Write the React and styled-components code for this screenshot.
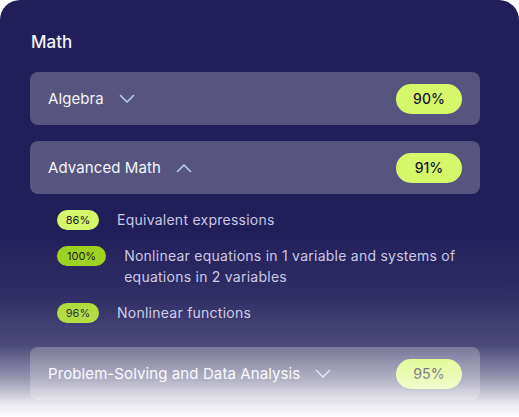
import React from 'react';
import styled, { createGlobalStyle } from 'styled-components';

const Global = createGlobalStyle`
  html, body { margin: 0; padding: 0; background: #ffffff; }
  body { font-family: Inter, "Noto Sans", sans-serif; }
`;

const Card = styled.div`
  position: relative;
  width: 519px;
  height: 417px;
  overflow: hidden;
  box-sizing: border-box;
  background: #211e5a;
  border-radius: 20px 20px 0 0;
  padding: 30px 39px 0 30px;
  display: flex;
  flex-direction: column;
`;

const Title = styled.div`
  font-size: 17px;
  line-height: 24px;
  font-weight: 500;
  color: #f3f3f8;
  padding-left: 1px;
  margin-bottom: 18px;
`;

const Section = styled.div`
  display: flex;
  flex-direction: column;
  margin-bottom: ${(p) => (p.open ? '0' : '16px')};
`;

const Row = styled.div`
  height: 53px;
  flex-shrink: 0;
  box-sizing: border-box;
  border-radius: 8px;
  background: #57547f;
  padding: 0 18px;
  display: flex;
  align-items: center;
`;

const RowLabel = styled.span`
  font-size: 15px;
  color: #f4f4fa;
  font-weight: 400;
  letter-spacing: 0.1px;
`;

const Chevron = styled.svg`
  margin-left: 15px;
  width: 16px;
  height: 10px;
  flex-shrink: 0;
`;

const Badge = styled.span`
  margin-left: auto;
  width: 66px;
  height: 30px;
  border-radius: 15px;
  background: #d7f76a;
  color: #15152a;
  font-size: 14px;
  font-weight: 500;
  display: flex;
  align-items: center;
  justify-content: center;
`;

const SubList = styled.div`
  display: flex;
  flex-direction: column;
  gap: 15px;
  padding: 15px 24px 24px 27px;
`;

const SubItem = styled.div`
  display: flex;
  align-items: flex-start;
  gap: 18px;
`;

const Pill = styled.span`
  flex-shrink: 0;
  height: 20px;
  margin-top: 1px;
  padding: 0 ${(p) => (p.wide ? '10px' : '8px')};
  min-width: 42px;
  box-sizing: border-box;
  border-radius: 10px;
  background: ${(p) => p.tone};
  color: #15152a;
  font-size: 11px;
  font-weight: 400;
  display: flex;
  align-items: center;
  justify-content: center;
`;

const SubText = styled.span`
  font-size: 14px;
  line-height: 21px;
  letter-spacing: 0.25px;
  color: #c9c7e3;
`;

const Fade = styled.div`
  position: absolute;
  left: 0;
  right: 0;
  bottom: 0;
  height: 187px;
  pointer-events: none;
  background: linear-gradient(
    to bottom,
    rgba(255, 255, 255, 0) 0%,
    rgba(255, 255, 255, 0.08) 37%,
    rgba(255, 255, 255, 0.2) 62%,
    rgba(255, 255, 255, 0.55) 80%,
    rgba(255, 255, 255, 0.88) 92%,
    #ffffff 100%
  );
`;

const Arrow = ({ up }) => (
  <Chevron viewBox="0 0 16 10" fill="none">
    <path
      d={up ? 'M1.5 8.5 L8 2 L14.5 8.5' : 'M1.5 1.5 L8 8 L14.5 1.5'}
      stroke="#b9cdef"
      strokeWidth="1.6"
      strokeLinecap="round"
      strokeLinejoin="round"
    />
  </Chevron>
);

const subs = [
  { pct: '86%', tone: '#d7f76a', text: 'Equivalent expressions' },
  {
    pct: '100%',
    tone: '#9dd11a',
    wide: true,
    text: 'Nonlinear equations in 1 variable and systems of equations in 2 variables',
  },
  { pct: '96%', tone: '#a8d829', text: 'Nonlinear functions' },
];

export default function App() {
  return (
    <>
      <Global />
      <Card>
        <Title>Math</Title>
        <Section>
          <Row>
            <RowLabel>Algebra</RowLabel>
            <Arrow />
            <Badge>90%</Badge>
          </Row>
        </Section>
        <Section open>
          <Row>
            <RowLabel>Advanced Math</RowLabel>
            <Arrow up />
            <Badge>91%</Badge>
          </Row>
          <SubList>
            {subs.map((s) => (
              <SubItem key={s.pct}>
                <Pill tone={s.tone} wide={s.wide}>{s.pct}</Pill>
                <SubText>{s.text}</SubText>
              </SubItem>
            ))}
          </SubList>
        </Section>
        <Section>
          <Row>
            <RowLabel>Problem-Solving and Data Analysis</RowLabel>
            <Arrow />
            <Badge>95%</Badge>
          </Row>
        </Section>
        <Fade />
      </Card>
    </>
  );
}
